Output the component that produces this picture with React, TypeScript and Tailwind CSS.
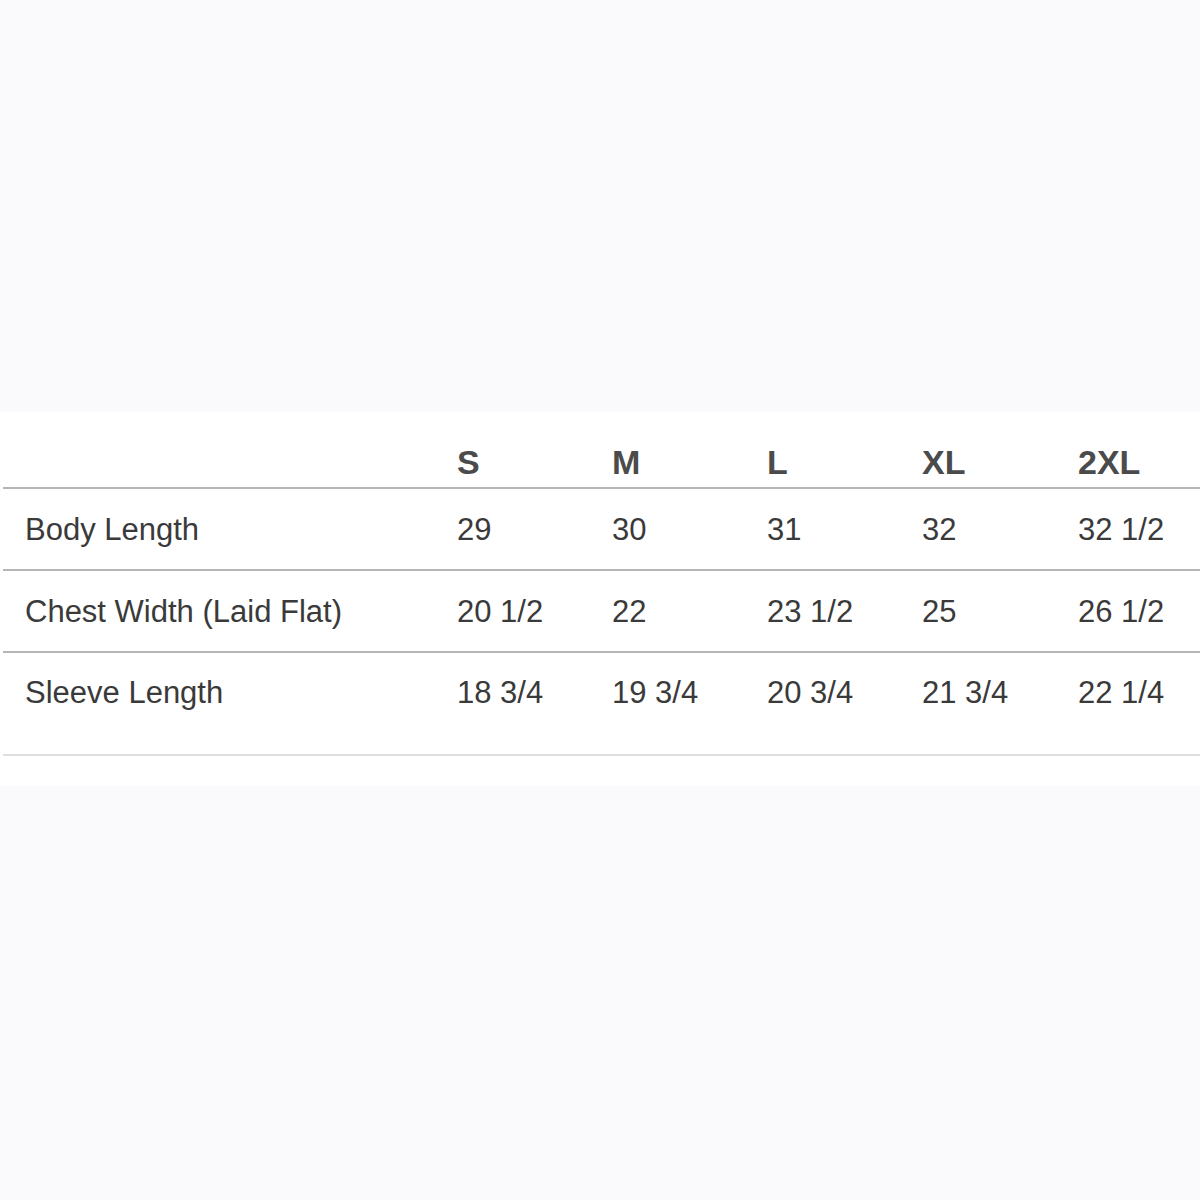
const sizes = ["S", "M", "L", "XL", "2XL"];

const rows = [
  { label: "Body Length", values: ["29", "30", "31", "32", "32 1/2"] },
  { label: "Chest Width (Laid Flat)", values: ["20 1/2", "22", "23 1/2", "25", "26 1/2"] },
  { label: "Sleeve Length", values: ["18 3/4", "19 3/4", "20 3/4", "21 3/4", "22 1/4"] },
];

const cols = "grid grid-cols-[454px_155px_155px_155px_156px_1fr]";

export default function App() {
  return (
    <div className="min-h-screen w-full bg-[#fafafc] pt-[412px] font-['Liberation_Sans',Arial,sans-serif]">
      {/* Size chart */}
      <div className="bg-white pl-[3px] pb-[30px]">
        <div className={`${cols} h-[77px] items-end border-b-2 border-[#b5b5b5] pb-[8px] text-[34px] font-bold leading-none text-[#4b4b4b]`}>
          <div />
          {sizes.map((s) => (
            <div key={s}>{s}</div>
          ))}
        </div>

        {rows.map((row, i) => {
          const last = i === rows.length - 1;
          return (
            <div
              key={row.label}
              className={`${cols} items-center text-[31px] leading-none text-[#3a3a3a] ${
                last ? "h-[103px] pb-[22px] border-b-2 border-[#dedede]" : "h-[82px] border-b-2 border-[#b5b5b5]"
              }`}
            >
              <div className="pl-[22px]">{row.label}</div>
              {row.values.map((v, j) => (
                <div key={j}>{v}</div>
              ))}
            </div>
          );
        })}
      </div>
    </div>
  );
}
